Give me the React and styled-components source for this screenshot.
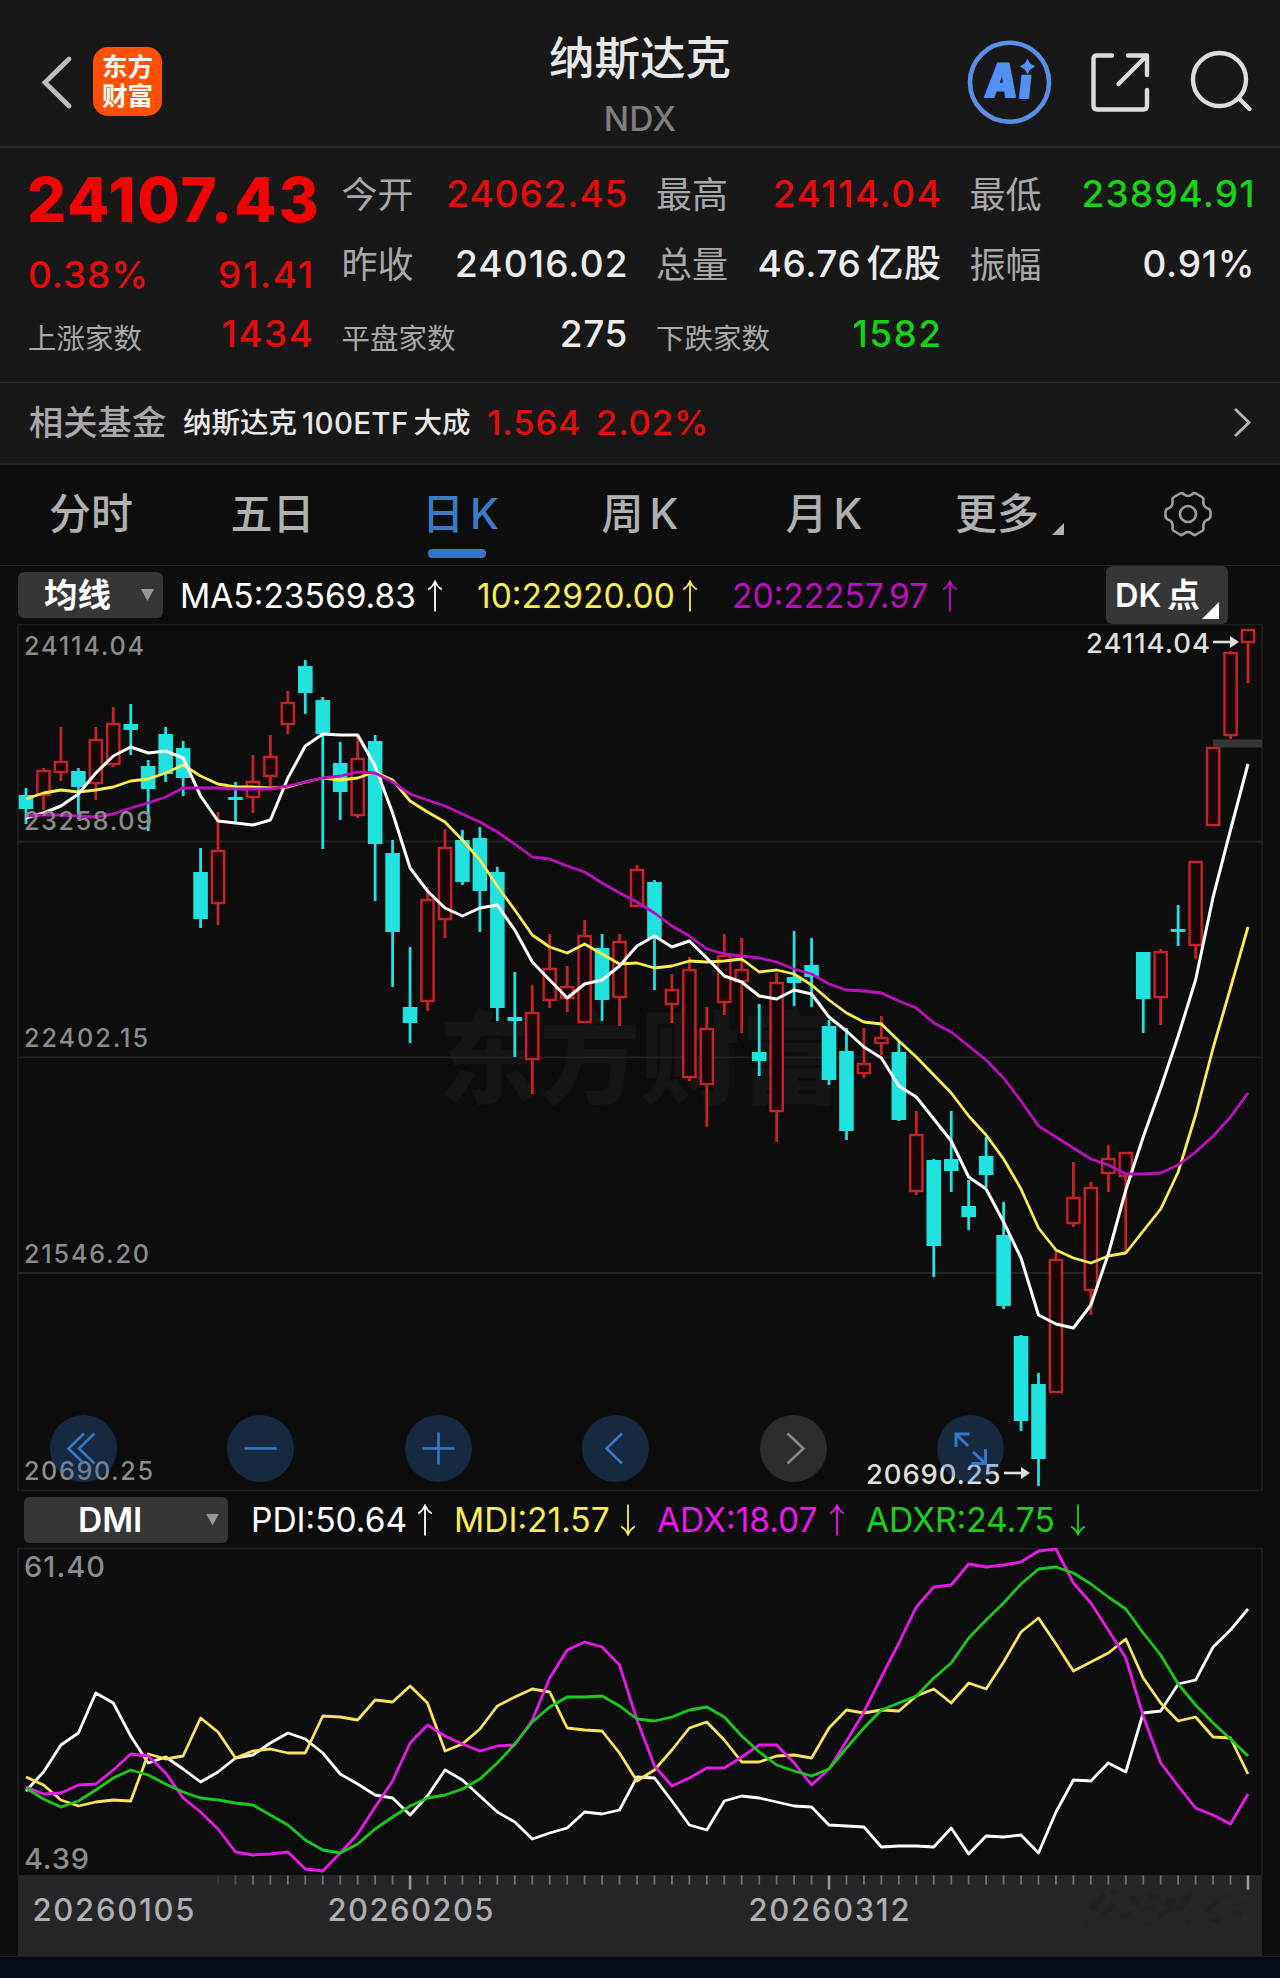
import styled, { createGlobalStyle } from 'styled-components'

const GlobalStyle = createGlobalStyle`
  body {
    margin: 0;
    background: #0d0d0d;
    color: #e8e8e8;
    font-family: Inter, "Noto Sans CJK SC", sans-serif;
    font-weight: 500;
  }
`

const RED = '#e60c0c'
const GREEN = '#15d315'
const YELLOW = '#f8ee52'
const PURPLE = '#bd10bd'
const MAGENTA = '#ea18ea'

const Page = styled.div`
  width: 1280px;
  height: 1978px;
  display: flex;
  flex-direction: column;
  overflow: hidden;
  white-space: nowrap;
`

/* header */

const Header = styled.header`
  height: 146px;
  display: grid;
  grid-template-columns: 400px 480px 400px;
  background: #181818;
  border-bottom: 2px solid #2a2a2b;
`

const HeaderLeft = styled.div`
  display: flex;
  align-items: flex-start;
  gap: 19px;
  padding: 47px 0 0 41px;
`

const BackIcon = styled.svg`
  width: 33px;
  height: 70px;
`

const Logo = styled.div`
  width: 69px;
  height: 56px;
  padding: 5px 0 8px;
  border-radius: 15px;
  background: #ff5005;
  color: #fff;
  font-size: 25.5px;
  font-weight: 700;
  line-height: 29px;
  text-align: center;
`

const HeaderTitle = styled.div`
  padding-top: 31px;
  text-align: center;
`

const Name = styled.div`
  font-size: 45.5px;
  line-height: 56px;
`

const Code = styled.div`
  margin-top: 16px;
  color: #7e7e81;
  font-size: 33.5px;
  line-height: 32px;
  letter-spacing: 0.3px;
`

const HeaderIcons = styled.svg`
  width: 400px;
  height: 146px;
`

/* quote */

const Quote = styled.section`
  height: 223px;
  padding: 11px 25px 0 28px;
  display: grid;
  grid-template-columns: 285px 286px 285px 285px;
  column-gap: 28.5px;
  background: #181818;
  border-bottom: 1px solid #2b2b2c;
`

const QuoteColumn = styled.div`
  display: flex;
  flex-direction: column;
`

const Price = styled.div`
  height: 82px;
  margin-left: -1px;
  color: #f00404;
  font-size: 61.5px;
  font-weight: 800;
  line-height: 82px;
  letter-spacing: 1.8px;
`

const QuoteRow = styled.div`
  height: ${({ $height }) => $height || 70}px;
  display: flex;
  align-items: center;
  justify-content: space-between;
`

const Label = styled.span`
  color: #a8a8aa;
  font-size: ${({ $small }) => $small ? 28.5 : 36}px;
  font-weight: 400;
  line-height: 40px;
  padding-top: ${({ $small }) => $small ? 10 : 1}px;
`

const Value = styled.span`
  display: flex;
  gap: 5px;
  color: ${({ $color }) => $color || '#ececec'};
  font-size: 37px;
  line-height: 40px;
  letter-spacing: ${({ $spacing = 0.6 }) => $spacing}px;
  margin-right: ${({ $spacing = 0.6 }) => -$spacing}px;
`

/* related fund */

const FundRow = styled.section`
  height: 80px;
  display: flex;
  align-items: center;
  padding: 0 29px;
  background: #181818;
  border-bottom: 2px solid #242425;
  line-height: 40px;
`

const FundLabel = styled.span`
  width: 154px;
  color: #a8a8aa;
  font-size: 34.3px;
`

const FundName = styled.span`
  display: flex;
  gap: 5px;
  width: 304px;
  font-size: 28.5px;
`

const FundTicker = styled.span`
  font-size: 29.5px;
  letter-spacing: 0.3px;
`

const FundValue = styled.span`
  width: ${({ $width }) => $width}px;
  color: ${RED};
  font-size: 34.5px;
  letter-spacing: 0.9px;
`

const FundChevron = styled.svg`
  width: 20px;
  height: 32px;
  margin-left: auto;
`

/* period tabs */

const Tabs = styled.nav`
  height: 100px;
  display: grid;
  grid-template-columns: 182px 181px 195px 164px 204px 142px 1fr;
  border-bottom: 1px solid #232324;
`

const Tab = styled.div`
  position: relative;
  display: flex;
  justify-content: center;
  gap: 6px;
  color: ${({ $active }) => $active ? '#3a7bc8' : '#b0b0b1'};
  font-size: 42px;
  line-height: 98px;
`

const ActiveBar = styled.div`
  position: absolute;
  left: 65px;
  bottom: 7px;
  width: 58px;
  height: 9px;
  border-radius: 4px;
  background: #3576c4;
`

const Corner = styled.i`
  position: absolute;
  right: ${({ $right }) => $right}px;
  bottom: ${({ $bottom }) => $bottom}px;
  width: ${({ $size }) => $size}px;
  height: ${({ $size }) => $size}px;
  background: ${({ $color }) => $color};
  clip-path: polygon(100% 0, 100% 100%, 0 100%);
`

const Gear = styled.svg`
  width: 52px;
  height: 52px;
  margin: 23px 0 0 94px;
`

/* indicator bars */

const IndicatorBar = styled.div`
  position: relative;
  height: ${({ $height }) => $height}px;
  display: flex;
  align-items: center;
  padding-left: ${({ $left }) => $left}px;
`

const Select = styled.div`
  position: relative;
  box-sizing: border-box;
  width: ${({ $width }) => $width}px;
  height: 46px;
  padding-left: ${({ $indent }) => $indent}px;
  margin-right: ${({ $after }) => $after}px;
  border-radius: 6px;
  background: #363637;
  color: #fff;
  font-size: 33.5px;
  font-weight: 600;
  line-height: 47px;
`

const Caret = styled.i`
  position: absolute;
  right: 9px;
  top: 17px;
  width: 13px;
  height: 12px;
  background: #98989a;
  clip-path: polygon(0 0, 100% 0, 50% 100%);
`

const Reading = styled.div`
  display: flex;
  align-items: center;
  justify-content: space-between;
  width: ${({ $width }) => $width}px;
  margin: 1px ${({ $after }) => $after}px 0 0;
  color: ${({ $color }) => $color};
  font-size: 33.5px;
  font-weight: 400;
`

const ArrowIcon = styled.svg`
  width: 16px;
  height: 32px;
  transform: ${({ $down }) => $down ? 'rotate(180deg)' : 'none'};
`

const DkButton = styled.div`
  position: absolute;
  left: 1106px;
  top: 0;
  width: 113px;
  height: 58px;
  padding-left: 9px;
  border-radius: 6px;
  background: #363637;
  color: #fff;
  display: flex;
  gap: 6px;
  font-size: 32.5px;
  font-weight: 600;
  line-height: 60px;
`

/* charts */

const ChartBox = styled.div`
  position: relative;
  height: ${({ $height }) => $height}px;

  > svg {
    display: block;
  }
`

const Controls = styled.div`
  position: absolute;
  left: 49.5px;
  bottom: 9.5px;
  display: flex;
  gap: 110.5px;
`

const RoundButton = styled.div`
  width: 67px;
  height: 67px;
  border-radius: 50%;
  background: ${({ $muted }) => $muted ? 'rgba(115,115,120,.3)' : 'rgba(43,106,180,.3)'};
  color: ${({ $muted }) => $muted ? '#89898b' : '#3478c8'};
`

const Axis = styled.div`
  height: 81px;
  margin: 0 18px;
  background: #252527;
`

const BottomStrip = styled.div`
  flex: 1;
  border-top: 1px solid #1c2022;
  background: #030b16;
`

const STEP = 17.457
const xAt = i => 26 + i * STEP

// 1 = rising; then high, body top, body bottom, low
const candles = [
  [0, 788, 795, 809, 824], [1, 768, 770, 796, 810], [1, 727, 761, 773, 781],
  [0, 768, 771, 787, 819], [1, 727, 739, 784, 800], [1, 707, 723, 765, 767],
  [0, 704, 724, 730, 755], [0, 760, 766, 789, 831], [0, 727, 734, 774, 782],
  [0, 741, 748, 778, 796], [0, 848, 872, 919, 928], [1, 812, 850, 904, 925],
  [0, 782, 797, 800, 822], [1, 755, 781, 798, 813], [1, 735, 756, 777, 786],
  [1, 691, 702, 725, 734], [0, 660, 666, 693, 714], [0, 697, 700, 734, 849],
  [0, 742, 763, 792, 820], [1, 736, 758, 816, 818], [0, 735, 741, 844, 901],
  [0, 840, 853, 932, 987], [0, 947, 1007, 1023, 1043], [1, 887, 899, 1002, 1011],
  [1, 829, 847, 920, 938], [0, 830, 840, 882, 885], [0, 827, 838, 891, 932],
  [0, 867, 872, 1008, 1021], [0, 972, 1017, 1021, 1057], [1, 985, 1012, 1060, 1094],
  [1, 934, 968, 1001, 1008], [1, 966, 986, 999, 1012], [1, 920, 935, 1023, 1023],
  [0, 934, 948, 1000, 1021], [1, 934, 941, 998, 1026], [1, 865, 869, 907, 907],
  [0, 880, 882, 938, 990], [1, 974, 989, 1005, 1023], [1, 957, 969, 1078, 1081],
  [1, 1007, 1028, 1085, 1127], [1, 934, 955, 1003, 1015], [1, 938, 969, 982, 1033],
  [0, 1004, 1052, 1061, 1076], [1, 973, 982, 1112, 1142], [0, 931, 977, 983, 1006],
  [0, 938, 965, 977, 1007], [0, 1020, 1026, 1080, 1085], [0, 1028, 1051, 1131, 1140],
  [1, 1028, 1063, 1074, 1078], [1, 1016, 1037, 1044, 1055], [0, 1041, 1052, 1120, 1121],
  [1, 1111, 1134, 1192, 1195], [0, 1159, 1160, 1246, 1277], [0, 1111, 1159, 1171, 1192],
  [0, 1180, 1206, 1217, 1230], [0, 1137, 1156, 1175, 1187], [0, 1202, 1235, 1306, 1309],
  [0, 1335, 1336, 1421, 1431], [0, 1373, 1384, 1459, 1486], [1, 1250, 1259, 1393, 1393],
  [1, 1162, 1197, 1224, 1227], [1, 1182, 1187, 1291, 1315], [1, 1145, 1158, 1174, 1192],
  [1, 1153, 1152, 1177, 1252], [0, 952, 952, 999, 1033], [1, 949, 951, 998, 1025],
  [0, 905, 929, 932, 946], [1, 861, 861, 946, 959], [1, 747, 747, 826, 826],
  [1, 651, 652, 736, 739], [1, 629, 629, 643, 683],
]

const ma5 = [
  818, 813, 806, 794, 773, 756, 747, 753, 751, 758, 796, 821, 823, 825, 820, 778, 746, 734,
  735, 735, 766, 813, 868, 891, 908, 916, 908, 905, 930, 962, 980, 998, 984, 980, 966, 946,
  936, 947, 941, 958, 976, 982, 996, 999, 990, 994, 1017, 1031, 1047, 1058, 1086, 1097, 1119,
  1141, 1177, 1189, 1222, 1258, 1315, 1324, 1328, 1305, 1254, 1190, 1137, 1088, 1036, 980,
  897, 830, 764,
]

const ma10 = [
  799, 793, 790, 792, 790, 787, 781, 779, 773, 765, 776, 784, 787, 787, 788, 787, 782, 778,
  780, 778, 772, 780, 801, 812, 822, 840, 860, 886, 910, 935, 947, 953, 944, 954, 964, 963,
  968, 966, 961, 962, 961, 959, 972, 970, 974, 985, 1000, 1013, 1022, 1024, 1041, 1057, 1075,
  1093, 1116, 1135, 1159, 1189, 1228, 1250, 1258, 1263, 1256, 1253, 1231, 1209, 1172, 1115,
  1048, 988, 927,
]

const ma20 = [
  816, 815, 815, 816, 817, 814, 808, 803, 797, 788, 788, 788, 789, 789, 789, 786, 782, 778,
  776, 772, 773, 782, 794, 800, 806, 814, 822, 832, 844, 857, 859, 866, 872, 883, 893, 902,
  913, 926, 936, 949, 954, 956, 958, 962, 969, 974, 984, 990, 991, 993, 1001, 1008, 1023,
  1032, 1046, 1060, 1078, 1101, 1126, 1137, 1148, 1159, 1165, 1174, 1174, 1173, 1165, 1152,
  1136, 1117, 1093,
]

const pdi = [
  1791, 1772, 1745, 1733, 1693, 1703, 1736, 1763, 1757, 1769, 1782, 1772, 1758, 1755, 1743,
  1733, 1739, 1753, 1774, 1784, 1795, 1798, 1815, 1796, 1770, 1780, 1796, 1812, 1822, 1839,
  1833, 1828, 1812, 1814, 1810, 1777, 1778, 1801, 1825, 1830, 1801, 1796, 1798, 1802, 1806,
  1807, 1825, 1826, 1827, 1847, 1846, 1846, 1847, 1828, 1854, 1836, 1837, 1835, 1853, 1812,
  1780, 1781, 1763, 1772, 1713, 1711, 1684, 1680, 1647, 1630, 1609,
]

const mdi = [
  1777, 1785, 1800, 1806, 1802, 1800, 1801, 1754, 1759, 1756, 1718, 1732, 1758, 1751, 1749,
  1753, 1753, 1716, 1717, 1720, 1700, 1702, 1686, 1703, 1751, 1744, 1729, 1706, 1697, 1689,
  1692, 1728, 1730, 1731, 1753, 1781, 1770, 1750, 1728, 1722, 1740, 1762, 1762, 1756, 1755,
  1758, 1728, 1710, 1713, 1710, 1711, 1696, 1689, 1703, 1683, 1689, 1662, 1632, 1618, 1644,
  1671, 1662, 1653, 1639, 1678, 1703, 1721, 1717, 1737, 1738, 1774,
]

const adx = [
  1787, 1794, 1793, 1785, 1784, 1770, 1754, 1756, 1773, 1798, 1812, 1829, 1852, 1855, 1854,
  1852, 1869, 1871, 1853, 1834, 1807, 1781, 1743, 1725, 1736, 1744, 1751, 1746, 1745, 1720,
  1678, 1650, 1642, 1647, 1665, 1720, 1766, 1786, 1778, 1768, 1768, 1757, 1745, 1745, 1763,
  1785, 1769, 1741, 1712, 1677, 1643, 1607, 1587, 1585, 1564, 1567, 1565, 1562, 1551, 1549,
  1583, 1603, 1630, 1658, 1716, 1763, 1786, 1808, 1815, 1824, 1794,
]

const adxr = [
  1788, 1799, 1807, 1801, 1790, 1778, 1770, 1775, 1784, 1792, 1798, 1800, 1803, 1805, 1815,
  1825, 1840, 1850, 1853, 1844, 1829, 1817, 1806, 1798, 1795, 1789, 1779, 1763, 1744, 1722,
  1707, 1697, 1697, 1696, 1706, 1719, 1721, 1717, 1710, 1707, 1717, 1736, 1752, 1765, 1771,
  1776, 1769, 1748, 1728, 1710, 1703, 1696, 1678, 1663, 1638, 1620, 1603, 1584, 1569, 1567,
  1573, 1584, 1597, 1609, 1633, 1655, 1684, 1705, 1723, 1739, 1756,
]

const quotes = [
  [
    { label: '今开', value: '24062.45', color: RED, spacing: 0.9 },
    { label: '昨收', value: '24016.02', spacing: 1.1 },
    { label: '平盘家数', value: '275' },
  ],
  [
    { label: '最高', value: '24114.04', color: RED, spacing: 1.5 },
    { label: '总量', value: '46.76', unit: '亿股', spacing: 0.6 },
    { label: '下跌家数', value: '1582', color: GREEN, spacing: 1.4 },
  ],
  [
    { label: '最低', value: '23894.91', color: GREEN, spacing: 1.1 },
    { label: '振幅', value: '0.91%', spacing: 0.7 },
  ],
]

function Series({ data, color, width = 2.8 }) {
  return (
    <polyline
      points={data.map((y, i) => `${xAt(i).toFixed(1)},${y}`).join(' ')}
      fill="none"
      stroke={color}
      strokeWidth={width}
      strokeLinejoin="round"
    />
  )
}

function Candle({ index, data: [up, high, top, bottom, low] }) {
  const x = xAt(index)
  const color = up ? '#c52328' : '#20e3e0'
  return (
    <g stroke={color} strokeWidth="2.4">
      {high < top && <path d={`M${x} ${high}V${top}`} strokeWidth="2.8" />}
      {low > bottom && <path d={`M${x} ${bottom}V${low}`} strokeWidth="2.8" />}
      {up
        ? <rect x={x - 6.1} y={top + 1} width="12.2" height={bottom - top - 2} fill="#180609" />
        : <rect x={x - 7.3} y={top} width="14.6" height={bottom - top} fill={color} stroke="none" />}
    </g>
  )
}

function ChartText({ x, y, size, width, color = '#8b8b8e', children }) {
  return (
    <text
      x={x} y={y + size * 0.364} fontSize={size} fill={color}
      textLength={width} lengthAdjust="spacing"
    >
      {children}
    </text>
  )
}

function Pointer({ x, y }) {
  return (
    <g fill="#dedede">
      <rect x={x} y={y - 1.3} width="18" height="2.6" />
      <path d={`M${x + 17} ${y - 6}L${x + 26} ${y}L${x + 17} ${y + 6}Z`} />
    </g>
  )
}

function Arrow({ down }) {
  return (
    <ArrowIcon viewBox="0 0 16 32" $down={down}>
      <path d="M8 31.5V1.5M1.2 9.5Q6 6.5 8 1.5Q10 6.5 14.8 9.5" fill="none" stroke="currentColor" strokeWidth="1.8" />
    </ArrowIcon>
  )
}

function Control({ d, muted, width = 2.6 }) {
  return (
    <RoundButton $muted={muted}>
      <svg width="67" height="67" viewBox="0 0 67 67">
        <path d={d} fill="none" stroke="currentColor" strokeWidth={width} />
      </svg>
    </RoundButton>
  )
}

function KLineChart() {
  return (
    <ChartBox $height={867}>
      <svg width="1280" height="867" viewBox="0 624 1280 867">
        <text x="438" y="1096" fontSize="101" fontWeight="900" fill="#151516">东方财富</text>
        <rect x="18" y="624.5" width="1244" height="866" fill="none" stroke="#212122" strokeWidth="1.6" />
        <path d="M18 841.5H1262M18 1057.3H1262M18 1273H1262" stroke="#232324" strokeWidth="1.8" />
        <rect x="1213" y="739.5" width="49" height="8" fill="#363637" />
        {candles.map((c, i) => <Candle key={i} index={i} data={c} />)}
        <Series data={ma10} color={YELLOW} />
        <Series data={ma5} color="#fff" width={3} />
        <Series data={ma20} color={PURPLE} />
        <ChartText x={24} y={645.5} size={25.2} width={120}>24114.04</ChartText>
        <ChartText x={24} y={821} size={25.2} width={128}>23258.09</ChartText>
        <ChartText x={24} y={1038} size={25.2} width={124}>22402.15</ChartText>
        <ChartText x={24} y={1254} size={25.2} width={125}>21546.20</ChartText>
        <ChartText x={24} y={1470.5} size={25.2} width={129}>20690.25</ChartText>
        <ChartText x={1086} y={642.5} size={27.5} width={124} color="#dedede">24114.04</ChartText>
        <Pointer x={1213} y={642} />
        <ChartText x={866} y={1473.5} size={27.5} width={134.5} color="#dedede">20690.25</ChartText>
        <Pointer x={1004} y={1473} />
      </svg>
      <Controls>
        <Control d="M34 18.5L18.5 33.5L34 48.5M44.5 18.5L29 33.5L44.5 48.5" />
        <Control d="M17.5 33.5H49.5" />
        <Control d="M17.5 33.5H49.5M33.5 17.5V49.5" />
        <Control d="M40 18.5L24.5 33.5L40 48.5" />
        <Control muted d="M27.5 18.5L43.5 33.5L27.5 48.5" />
        <Control width={3} d="M19 32V19H32.5M19 19L31 31M36 37L48 48M48.5 34V48.5H34.5" />
      </Controls>
    </ChartBox>
  )
}

function DmiChart() {
  return (
    <ChartBox $height={327}>
      <svg width="1280" height="327" viewBox="0 1548 1280 327">
        <rect x="18" y="1548.5" width="1244" height="330" fill="none" stroke="#212122" strokeWidth="1.6" />
        <ChartText x={24} y={1566.5} size={29} width={81}>61.40</ChartText>
        <ChartText x={24} y={1858} size={29} width={65}>4.39</ChartText>
        <Series data={pdi} color="#fff" />
        <Series data={mdi} color="#f7e45c" />
        <Series data={adx} color={MAGENTA} />
        <Series data={adxr} color="#1bc91b" />
      </svg>
    </ChartBox>
  )
}

function TimeAxis() {
  const ticks = Array.from({ length: 60 }, (_, i) => i + 11)
  return (
    <Axis>
      <svg width="1244" height="81" viewBox="18 1875 1244 81">
        {ticks.map(i => {
          const major = i === 22 || i === 46 || i === 70
          return (
            <rect
              key={i} x={xAt(i) - (major ? 1.3 : 0.9)} y="1875.5"
              width={major ? 2.6 : 1.8} height={major ? 14 : 9}
              fill={major ? '#98989a' : '#707072'} opacity={i === 11 ? 0.25 : i === 12 ? 0.6 : 1}
            />
          )
        })}
        <ChartText x={32.5} y={1910} size={31} width={162} color="#aeaeb0">20260105</ChartText>
        <ChartText x={327.5} y={1910} size={31} width={166} color="#aeaeb0">20260205</ChartText>
        <ChartText x={748.5} y={1910} size={31} width={161} color="#aeaeb0">20260312</ChartText>
        <g fill="none" stroke="#212123" strokeLinecap="round">
          <path d="M1093 1908L1103 1896M1103 1914L1113 1906M1132 1898L1139 1904M1151 1897h5M1180 1907L1190 1897M1168 1902h6" strokeWidth="6" />
          <path d="M1122 1917L1130 1913M1146 1909h5M1160 1915L1172 1908M1206 1910L1218 1901M1212 1920h6M1234 1914h6" strokeWidth="5" />
          <path d="M1084 1922h2M1146 1924h2M1186 1921h2M1218 1924h2M1240 1904h2M1112 1893h4M1226 1896h3" strokeWidth="3" />
        </g>
      </svg>
    </Axis>
  )
}

export default function App() {
  return (
    <Page>
      <GlobalStyle />
      <Header>
        <HeaderLeft>
          <BackIcon viewBox="0 0 33 70">
            <path d="M28 12L4 35.5L28 59" fill="none" stroke="#bcbcbd" strokeWidth="4.8" strokeLinecap="round" />
          </BackIcon>
          <Logo>东方<br />财富</Logo>
        </HeaderLeft>
        <HeaderTitle>
          <Name>纳斯达克</Name>
          <Code>NDX</Code>
        </HeaderTitle>
        <HeaderIcons viewBox="880 0 400 146">
          <circle cx="1009.5" cy="82.3" r="39.5" fill="none" stroke="#5790e6" strokeWidth="4.6" />
          <g fill="#5290f2" stroke="#5290f2" strokeWidth="2" strokeLinejoin="round" fontWeight="900">
            <text transform="translate(984 97) skewX(-6)" fontSize="46" textLength="32" lengthAdjust="spacingAndGlyphs">A</text>
            <text transform="translate(1018 98) skewX(-6)" fontSize="41">ı</text>
            <path d="M1027.5 60Q1029 65 1034 66.5Q1029 68 1027.5 73Q1026 68 1021 66.5Q1026 65 1027.5 60Z" strokeWidth="1.6" />
          </g>
          <g fill="none" stroke="#dcdcdc" strokeWidth="4.4" strokeLinecap="round" strokeLinejoin="round">
            <path d="M1112 55.5H1097Q1093.5 55.5 1093.5 59V105.5Q1093.5 109.5 1097 109.5H1143.5Q1147 109.5 1147 106V90" />
            <path d="M1128 55.5H1147V75M1146 56.5L1118.5 84" />
            <circle cx="1219.5" cy="79.5" r="26.5" />
            <path d="M1239 98.5L1249.5 109" />
          </g>
        </HeaderIcons>
      </Header>
      <Quote>
        <QuoteColumn>
          <Price>24107.43</Price>
          <QuoteRow $height={67}>
            <Value $color={RED} $spacing={0.9}>0.38%</Value>
            <Value $color={RED} $spacing={1.6}>91.41</Value>
          </QuoteRow>
          <QuoteRow $height={52}>
            <Label $small>上涨家数</Label>
            <Value $color={RED} $spacing={1.5}>1434</Value>
          </QuoteRow>
        </QuoteColumn>
        {quotes.map((column, i) => (
          <QuoteColumn key={i}>
            {column.map(({ label, value, unit, color, spacing }) => (
              <QuoteRow key={label}>
                <Label $small={label.length > 2}>{label}</Label>
                <Value $color={color} $spacing={spacing}>
                  {value}
                  {unit && <span>{unit}</span>}
                </Value>
              </QuoteRow>
            ))}
          </QuoteColumn>
        ))}
      </Quote>
      <FundRow>
        <FundLabel>相关基金</FundLabel>
        <FundName>纳斯达克<FundTicker>100ETF</FundTicker>大成</FundName>
        <FundValue $width={109}>1.564</FundValue>
        <FundValue $width={120}>2.02%</FundValue>
        <FundChevron viewBox="0 0 20 32">
          <path d="M4 2L18 15.5L4 29" fill="none" stroke="#b4b4b5" strokeWidth="2.8" />
        </FundChevron>
      </FundRow>
      <Tabs>
        <Tab>分时</Tab>
        <Tab>五日</Tab>
        <Tab $active>日<span>K</span><ActiveBar /></Tab>
        <Tab>周<span>K</span></Tab>
        <Tab>月<span>K</span></Tab>
        <Tab>更多<Corner $right={4} $bottom={30} $size={12} $color="#b0b0b1" /></Tab>
        <Gear viewBox="0 0 52 52">
          <g fill="none" stroke="#9c9c9e" strokeWidth="2.6" strokeLinejoin="round">
            <path d="M18 5.5Q20 4.5 21.5 6Q26 10 30.5 6Q32 4.5 34 5.5L40 9Q42 10.5 41.5 12.5Q40.5 18.5 46 20.5Q48.5 21.5 48.5 24V28Q48.5 30.5 46 31.5Q40.5 33.5 41.5 39.5Q42 41.5 40 43L34 46.5Q32 47.5 30.5 46Q26 42 21.5 46Q20 47.5 18 46.5L12 43Q10 41.5 10.5 39.5Q11.5 33.5 6 31.5Q3.5 30.5 3.5 28V24Q3.5 21.5 6 20.5Q11.5 18.5 10.5 12.5Q10 10.5 12 9Z" />
            <circle cx="26" cy="26" r="8" />
          </g>
        </Gear>
      </Tabs>
      <IndicatorBar $height={58} $left={18}>
        <Select $width={145} $indent={26} $after={17}>均线<Caret /></Select>
        <Reading $width={263} $after={34} $color="#fff">MA5:23569.83<Arrow /></Reading>
        <Reading $width={221} $after={34} $color={YELLOW}>10:22920.00<Arrow /></Reading>
        <Reading $width={226} $after={0} $color={PURPLE}>20:22257.97<Arrow /></Reading>
        <DkButton>DK<span>点</span><Corner $right={9} $bottom={5} $size={17} $color="#fff" /></DkButton>
      </IndicatorBar>
      <KLineChart />
      <IndicatorBar $height={57} $left={24}>
        <Select $width={204} $indent={54} $after={23}>DMI<Caret /></Select>
        <Reading $width={182} $after={21} $color="#fff">PDI:50.64<Arrow /></Reading>
        <Reading $width={182} $after={21} $color={YELLOW}>MDI:21.57<Arrow down /></Reading>
        <Reading $width={188} $after={21} $color={MAGENTA}>ADX:18.07<Arrow /></Reading>
        <Reading $width={220} $after={0} $color="#1bd01b">ADXR:24.75<Arrow down /></Reading>
      </IndicatorBar>
      <DmiChart />
      <TimeAxis />
      <BottomStrip />
    </Page>
  )
}
